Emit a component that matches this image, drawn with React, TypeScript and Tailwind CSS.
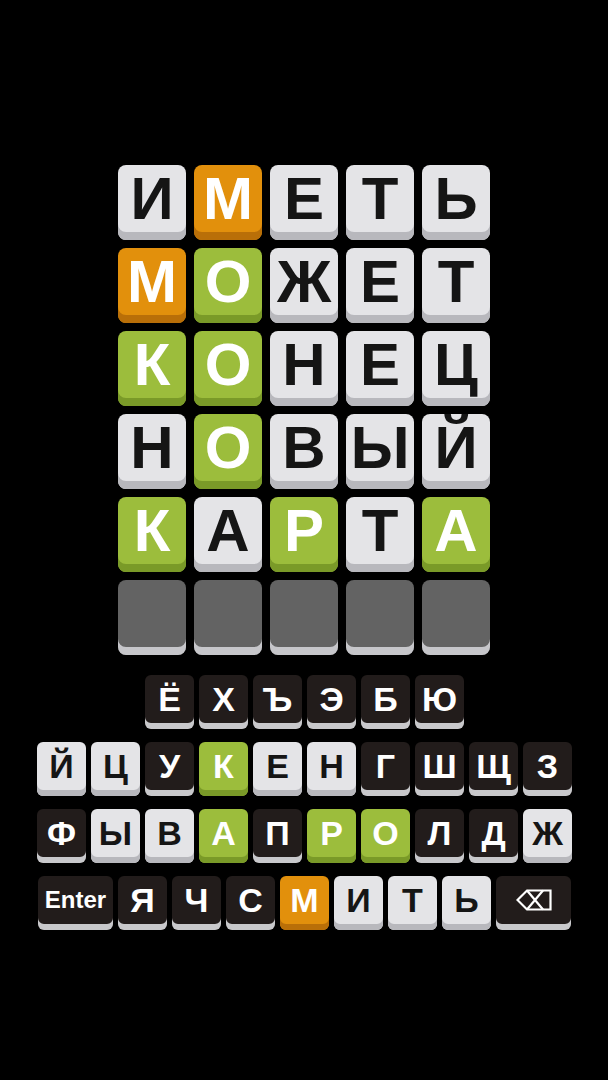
import React from "react";

type C = "l" | "o" | "g" | "d" | "e";

const tileCls: Record<C, string> = {
  l: "bg-[#e4e4e7] text-[#151515] shadow-[inset_0_-8px_0_#b8b8bd]",
  o: "bg-[#e2900c] text-white shadow-[inset_0_-8px_0_#b96f08]",
  g: "bg-[#9cbd3c] text-white shadow-[inset_0_-8px_0_#7a9a28]",
  d: "bg-[#221c1b] text-white shadow-[inset_0_-7px_0_#c8c8cb]",
  e: "bg-[#636363] text-white shadow-[inset_0_-8px_0_#c6c6ca]",
};

const keyCls: Record<C, string> = {
  l: "bg-[#e4e4e7] text-[#151515] shadow-[inset_0_-6px_0_#b8b8bd]",
  o: "bg-[#e2900c] text-white shadow-[inset_0_-6px_0_#b96f08]",
  g: "bg-[#9cbd3c] text-white shadow-[inset_0_-6px_0_#7a9a28]",
  d: "bg-[#221c1b] text-white shadow-[inset_0_-6px_0_#c8c8cb]",
  e: "bg-[#636363] text-white shadow-[inset_0_-6px_0_#c6c6ca]",
};

const grid: [string, C][][] = [
  [["И", "l"], ["М", "o"], ["Е", "l"], ["Т", "l"], ["Ь", "l"]],
  [["М", "o"], ["О", "g"], ["Ж", "l"], ["Е", "l"], ["Т", "l"]],
  [["К", "g"], ["О", "g"], ["Н", "l"], ["Е", "l"], ["Ц", "l"]],
  [["Н", "l"], ["О", "g"], ["В", "l"], ["Ы", "l"], ["Й", "l"]],
  [["К", "g"], ["А", "l"], ["Р", "g"], ["Т", "l"], ["А", "g"]],
  [["", "e"], ["", "e"], ["", "e"], ["", "e"], ["", "e"]],
];

const kb: [string, C][][] = [
  [["Ё", "d"], ["Х", "d"], ["Ъ", "d"], ["Э", "d"], ["Б", "d"], ["Ю", "d"]],
  [["Й", "l"], ["Ц", "l"], ["У", "d"], ["К", "g"], ["Е", "l"], ["Н", "l"], ["Г", "d"], ["Ш", "d"], ["Щ", "d"], ["З", "d"]],
  [["Ф", "d"], ["Ы", "l"], ["В", "l"], ["А", "g"], ["П", "d"], ["Р", "g"], ["О", "g"], ["Л", "d"], ["Д", "d"], ["Ж", "l"]],
  [["ENTER", "d"], ["Я", "d"], ["Ч", "d"], ["С", "d"], ["М", "o"], ["И", "l"], ["Т", "l"], ["Ь", "l"], ["BACK", "d"]],
];

function Backspace() {
  return (
    <svg width="36" height="22" viewBox="0 0 36 22" fill="none" stroke="white" strokeWidth="2.2" strokeLinejoin="miter">
      <path d="M1.5 11 L11 1.5 H34.5 V20.5 H11 Z" />
      <path d="M11 1.5 L27 20.5 M27 1.5 L11 20.5" />
    </svg>
  );
}

export default function App() {
  return (
    <div
      className="w-[608px] h-[1080px] bg-black flex flex-col items-center"
      style={{ fontFamily: '"Liberation Sans", Arial, sans-serif' }}
    >
      <div className="mt-[165px] flex flex-col gap-[8px]">
        {grid.map((row, i) => (
          <div key={i} className="flex gap-[8px]">
            {row.map(([ch, c], j) => (
              <div
                key={j}
                className={`w-[68px] h-[75px] rounded-[8px] flex items-center justify-center pb-[8px] text-[60px] font-bold leading-none ${tileCls[c]}`}
              >
                {ch}
              </div>
            ))}
          </div>
        ))}
      </div>
      <div className="mt-[20px] flex flex-col items-center gap-[13px] pl-[1px]">
        {kb.map((row, i) => (
          <div key={i} className="flex gap-[5px]">
            {row.map(([ch, c], j) => {
              const wide = ch === "ENTER" || ch === "BACK";
              return (
                <div
                  key={j}
                  className={`${wide ? "w-[75px]" : "w-[49px]"} h-[54px] rounded-[6px] flex items-center justify-center pb-[6px] font-bold leading-none ${ch === "ENTER" ? "text-[24px]" : "text-[34px]"} ${keyCls[c]}`}
                >
                  {ch === "ENTER" ? "Enter" : ch === "BACK" ? <Backspace /> : ch}
                </div>
              );
            })}
          </div>
        ))}
      </div>
    </div>
  );
}
